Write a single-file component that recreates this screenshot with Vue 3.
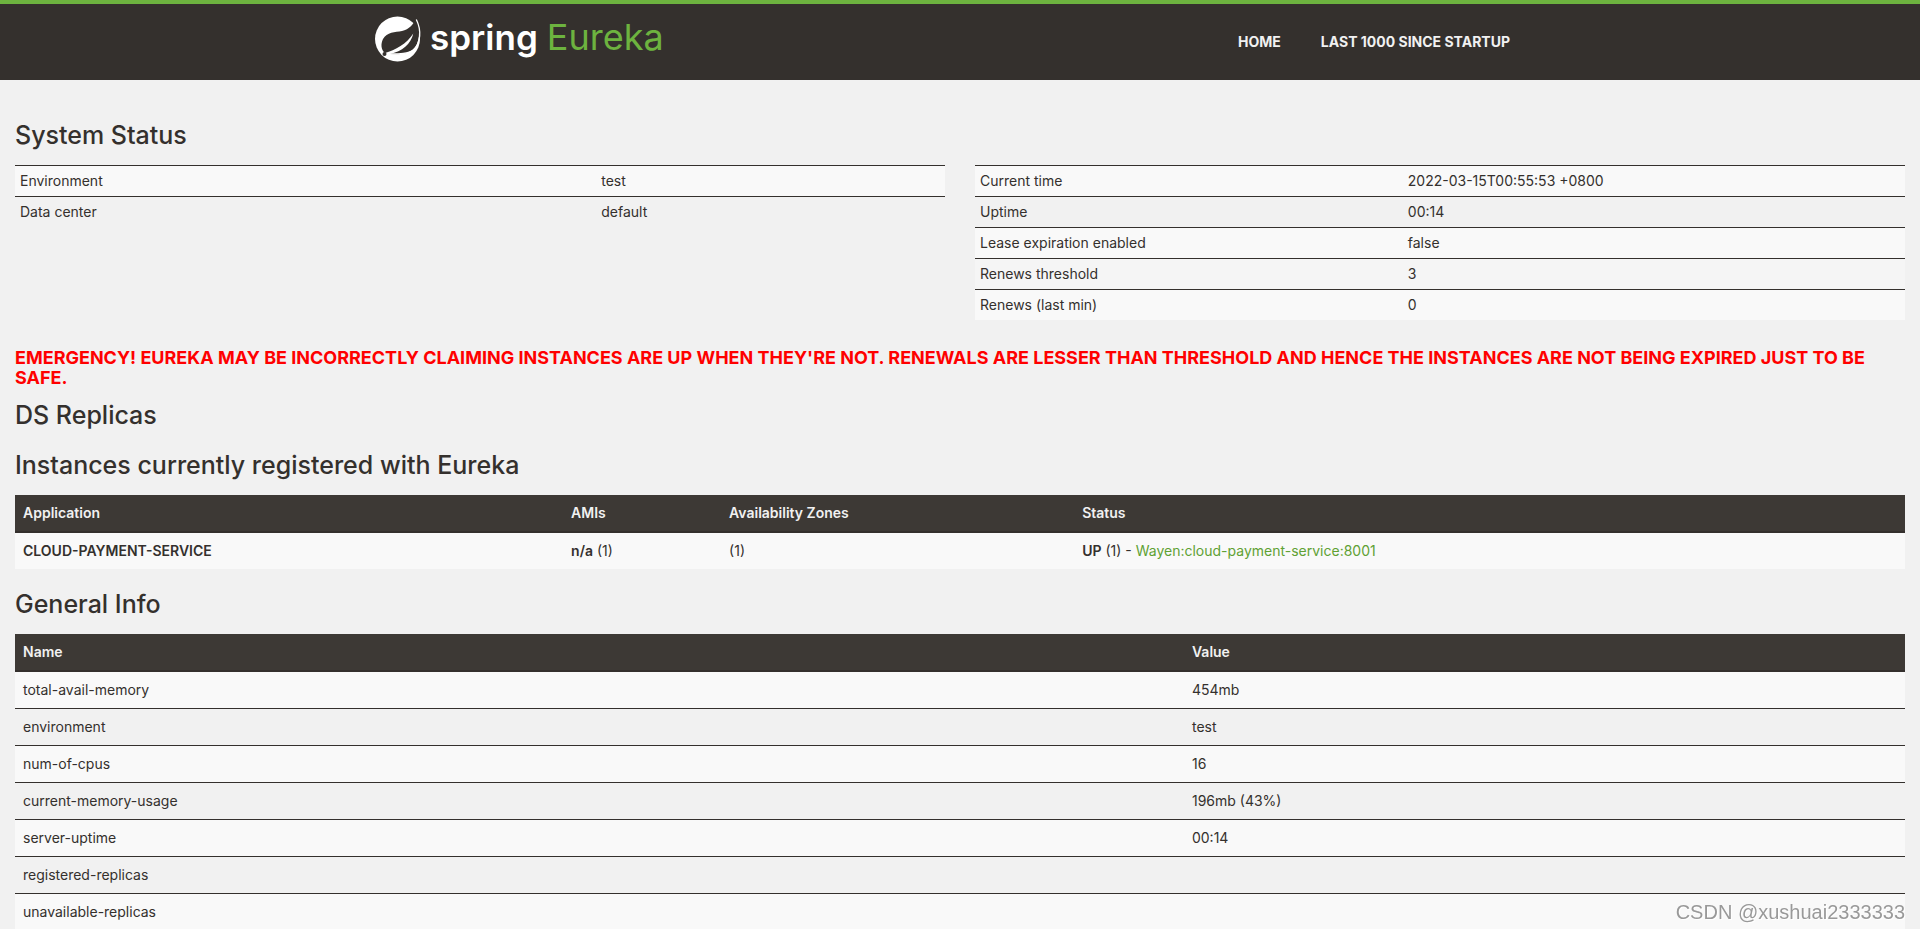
<script setup>
const navLinks = ['Home', 'Last 1000 since startup']

const environment = [
  ['Environment', 'test'],
  ['Data center', 'default'],
]

const runtime = [
  ['Current time', '2022-03-15T00:55:53 +0800'],
  ['Uptime', '00:14'],
  ['Lease expiration enabled', 'false'],
  ['Renews threshold', '3'],
  ['Renews (last min)', '0'],
]

const generalInfo = [
  ['total-avail-memory', '454mb'],
  ['environment', 'test'],
  ['num-of-cpus', '16'],
  ['current-memory-usage', '196mb (43%)'],
  ['server-uptime', '00:14'],
  ['registered-replicas', ''],
  ['unavailable-replicas', ''],
]
</script>

<template>
  <header class="navbar">
    <div class="navbar-inner">
      <a class="brand" href="#" aria-label="Spring Eureka">
        <svg class="leaf" viewBox="0 0 46 46" aria-hidden="true">
          <circle cx="22.500" cy="23" r="22.5" fill="#fff" />
          <path
            d="M41.300 2 C39 8 34 13.500 27 15 C20 16.300 12 16 8 23 C5.500 28 6 34 10 37 C20 34.500 32 27.500 38.300 17.500 C36 28 27 35.500 15 38 C23 38.500 32 38.500 38 33.500 C44.500 27.500 46 15 41.300 2 Z"
            fill="#34302d"
          />
          <path d="M41.300 3.500 C46.500 14 46 27 38.500 33.800 C33 38.300 23 38 13 38" fill="none" stroke="#fff" stroke-width="1.300" />
          <circle cx="9.500" cy="38" r="2" fill="#34302d" />
        </svg>
        <span class="brand-spring">spring</span>
        <span class="brand-eureka">Eureka</span>
      </a>
      <nav class="nav">
        <a v-for="link in navLinks" :key="link" href="#">{{ link }}</a>
      </nav>
    </div>
  </header>

  <main class="content">
    <h1>System Status</h1>
    <div class="status">
      <table class="compact environment">
        <tbody>
          <tr v-for="[name, value] in environment" :key="name">
            <td>{{ name }}</td>
            <td>{{ value }}</td>
          </tr>
        </tbody>
      </table>
      <table class="compact runtime">
        <tbody>
          <tr v-for="[name, value] in runtime" :key="name" :class="{ active: name === 'Renews threshold' }">
            <td>{{ name }}</td>
            <td>{{ value }}</td>
          </tr>
        </tbody>
      </table>
    </div>

    <h4 class="emergency">
      EMERGENCY! EUREKA MAY BE INCORRECTLY CLAIMING INSTANCES ARE UP WHEN THEY'RE NOT. RENEWALS ARE LESSER THAN
      THRESHOLD AND HENCE THE INSTANCES ARE NOT BEING EXPIRED JUST TO BE SAFE.
    </h4>

    <h1>DS Replicas</h1>
    <h1>Instances currently registered with Eureka</h1>
    <table class="wide instances">
      <thead>
        <tr>
          <th>Application</th>
          <th>AMIs</th>
          <th>Availability Zones</th>
          <th>Status</th>
        </tr>
      </thead>
      <tbody>
        <tr>
          <td><b>CLOUD-PAYMENT-SERVICE</b></td>
          <td><b>n/a</b> (1)</td>
          <td>(1)</td>
          <td><b>UP</b> (1) - <a href="#">Wayen:cloud-payment-service:8001</a></td>
        </tr>
      </tbody>
    </table>

    <h1>General Info</h1>
    <table class="wide general">
      <thead>
        <tr>
          <th>Name</th>
          <th>Value</th>
        </tr>
      </thead>
      <tbody>
        <tr v-for="[name, value] in generalInfo" :key="name">
          <td>{{ name }}</td>
          <td>{{ value }}</td>
        </tr>
      </tbody>
    </table>
  </main>

  <div class="watermark">CSDN @xushuai2333333</div>
</template>

<style>
body {
  background: #f1f1f1;
}
</style>

<style scoped>
.navbar,
.content {
  font-family: Inter, "Open Sans", sans-serif;
  font-size: 14px;
  line-height: 20px;
  color: #34302d;
}

.navbar {
  background: #34302d;
  border-top: 4px solid #6db33f;
}

.navbar-inner {
  display: flex;
  justify-content: space-between;
  align-items: flex-start;
  box-sizing: border-box;
  max-width: 1170px;
  height: 76px;
  margin: 0 auto;
}

.brand {
  display: flex;
  align-items: flex-start;
  padding-top: 12px;
  color: #fff;
  text-decoration: none;
  line-height: 42px;
}

.leaf {
  width: 46px;
  height: 46px;
  margin-right: 9px;
}

.brand-spring {
  font-size: 35px;
  font-weight: 600;
  margin-right: 9px;
}

.brand-eureka {
  font-size: 36px;
  font-weight: 400;
  color: #6db33f;
}

.nav {
  display: flex;
  padding: 28px 15px 0 0;
}

.nav a {
  padding: 0 20px;
  font-weight: 700;
  color: #f1f1f1;
  text-decoration: none;
  text-transform: uppercase;
}

.content {
  padding: 35px 15px 0;
}

h1 {
  margin: 0;
  padding: 5px 0 15px;
  font-size: 25px;
  font-weight: 500;
  line-height: 30px;
}

table {
  width: 100%;
  border-collapse: collapse;
  table-layout: fixed;
}

td,
th {
  text-align: left;
  vertical-align: top;
}

td {
  border-top: 1px solid #34302d;
}

tbody tr:nth-child(odd) {
  background: #f9f9f9;
}

tbody tr.active {
  background: #f5f5f5;
}

.status {
  display: grid;
  grid-template-columns: 1fr 1fr;
  column-gap: 30px;
  align-items: start;
}

.compact td {
  padding: 5px;
}

.environment td:first-child {
  width: 62.5%;
}

.runtime td:first-child {
  width: 46%;
}

.environment td,
.runtime td {
  box-sizing: border-box;
}

.wide {
  margin-bottom: 15px;
}

.wide td {
  padding: 8px;
}

.wide th {
  box-sizing: border-box;
  padding: 8px;
  background: #3d3935;
  color: #f1f1f1;
  border-bottom: 2px solid #34302d;
}

.wide tbody tr:first-child td {
  border-top: 0;
}

.instances th:nth-child(1) {
  width: 29%;
}

.instances th:nth-child(2) {
  width: 8.36%;
}

.instances th:nth-child(3) {
  width: 18.68%;
}

.general th:first-child {
  width: 61.85%;
}

.instances a {
  color: #5fa134;
  text-decoration: none;
}

b,
th {
  font-weight: 600;
}

.emergency {
  margin: 28px 0 7px;
  font-size: 18px;
  font-weight: 700;
  line-height: 20px;
  color: #f00;
}

.watermark {
  position: fixed;
  right: 15px;
  bottom: 4px;
  font-family: "Liberation Sans", sans-serif;
  font-size: 20px;
  line-height: 26px;
  color: #999;
  text-shadow: 1px 1px 0 #fff;
}
</style>
